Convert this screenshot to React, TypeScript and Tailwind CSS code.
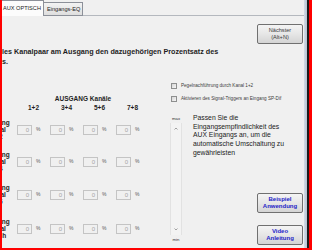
import React from 'react';

const columns = ['1+2', '3+4', '5+6', '7+8'];

const rows = [
  { label: ['Eingang', 'Kanal', '1+2'], mt: 'mt-[7px]' },
  { label: ['Eingang', 'Kanal', '3+4'], mt: 'mt-[11px]' },
  { label: ['Eingang', 'Kanal', '5+6'], mt: 'mt-[12px]' },
  { label: ['Eingang', 'Kanal', 'Misch'], mt: 'mt-[13px]' },
];

function WinButton({ lines, blue }: { lines: string[]; blue?: boolean }) {
  return (
    <div
      className={
        'w-[46px] h-[20px] rounded-[2px] border border-[#707070] bg-linear-to-b from-[#f4f4f4] via-[#e6e6e6] to-[#d4d4d4] flex flex-col items-center justify-center leading-[7px] ' +
        (blue ? 'text-[6px] font-bold text-[#2424c8]' : 'text-[5.6px] text-[#3a3a3a]')
      }
    >
      {lines.map(l => (
        <span key={l}>{l}</span>
      ))}
    </div>
  );
}

function Checkbox({ label }: { label: string }) {
  return (
    <div className="flex items-center h-[6px] pl-[21px] whitespace-nowrap">
      <div className="w-[6px] h-[6px] shrink-0 border border-[#8e8f8f] bg-linear-to-br from-[#d6d6d6] to-[#f6f6f6]" />
      <span className="ml-[4px] text-[4.6px] leading-[6px] text-[#3c3c3c]">{label}</span>
    </div>
  );
}

function PercentCell() {
  return (
    <div className="w-[33px] flex items-center shrink-0">
      <div className="w-[15px] h-[10px] border border-[#c4c4c4] bg-[#f0f0f0] flex items-center justify-end pr-[2px] text-[6px] text-[#a6a6a6] leading-none">
        0
      </div>
      <span className="ml-[4px] text-[5px] text-[#5a5a5a] leading-none">%</span>
    </div>
  );
}

export default function App() {
  return (
    <div className="w-[312px] h-[250px] flex flex-col bg-[#f0f0f0] overflow-hidden font-['Liberation_Sans',Arial,sans-serif] text-[#1e1e1e]">
      <div className="flex-1 flex min-h-0">
        <div className="w-[2px] bg-[#ff0000]" />

        <div className="flex-1 flex flex-col min-w-0 overflow-hidden">
          {/* tabs */}
          <div className="h-[16px] flex items-end shrink-0">
            <div className="h-[16px] w-[42px] bg-[#fcfcfc] border-t border-r border-[#8c9099] pl-[1px] pt-[4px] text-[5.6px] leading-[7px] text-[#222] whitespace-nowrap">
              AUX OPTISCH
            </div>
            <div className="h-[14px] w-[39px] border-t border-r border-b border-[#8c9099] bg-linear-to-b from-[#f3f3f3] to-[#dedede] pl-[3px] pt-[3px] text-[5.6px] leading-[7px] text-[#222] whitespace-nowrap">
              Eingangs-EQ
            </div>
            <div className="flex-1 h-[1px] bg-[#b4b8be]" />
          </div>

          {/* panel */}
          <div className="flex-1 flex flex-col min-h-0">
            <div className="flex justify-end pt-[8px] pr-[1px]">
              <WinButton lines={['Nächster', '(Alt+N)']} />
            </div>

            <div className="mt-[3px] text-[7.2px] leading-[10px] font-bold whitespace-nowrap">
              <div>les Kanalpaar am Ausgang den dazugehörigen Prozentsatz des</div>
              <div>s.</div>
            </div>

            <div className="flex-1 flex min-h-0">
              {/* left table */}
              <div className="w-[148px] shrink-0 flex flex-col">
                <div className="mt-[28px] ml-[15px] w-[132px] text-center text-[6.5px] leading-[8px] font-bold">
                  AUSGANG Kanäle
                </div>
                <div className="mt-[1px] ml-[15px] flex">
                  {columns.map(c => (
                    <div key={c} className="w-[33px] text-center text-[6.5px] leading-[8px] font-bold">
                      {c}
                    </div>
                  ))}
                </div>
                {rows.map((r, i) => (
                  <div key={i} className={'flex items-center h-[21px] ' + r.mt}>
                    <div className="-ml-[25px] w-[40px] shrink-0 text-center text-[6.5px] leading-[7px] font-bold">
                      {r.label.map(l => (
                        <div key={l}>{l}</div>
                      ))}
                    </div>
                    <div className="flex">
                      {columns.map(c => (
                        <PercentCell key={c} />
                      ))}
                    </div>
                  </div>
                ))}
              </div>

              {/* right side */}
              <div className="flex-1 flex flex-col min-w-0">
                <div className="mt-[16px]">
                  <Checkbox label="Pegelnachführung durch Kanal 1+2" />
                </div>
                <div className="mt-[7px]">
                  <Checkbox label="Aktivieren des Signal-Triggers an Eingang SP-Dif" />
                </div>

                <div className="flex-1 flex mt-[12px] min-h-0">
                  <div className="ml-[20px] w-[12px] flex flex-col items-center shrink-0">
                    <div className="mt-[2px] text-[4.3px] leading-[6px] text-[#333]">max</div>
                    <div className="mt-[1px] w-[12px] h-[112px] border-x border-[#e2e2e2] bg-[#f3f3f3] flex flex-col items-center justify-between py-[4px]">
                      <svg width="4" height="3" viewBox="0 0 4 3">
                        <path d="M0.5 2.5 L2 1 L3.5 2.5" stroke="#8a8a8a" strokeWidth="0.8" fill="none" />
                      </svg>
                      <svg width="4" height="3" viewBox="0 0 4 3">
                        <path d="M0.5 0.5 L2 2 L3.5 0.5" stroke="#8a8a8a" strokeWidth="0.8" fill="none" />
                      </svg>
                    </div>
                    <div className="mt-[2px] text-[4.3px] leading-[6px] text-[#333]">min</div>
                  </div>

                  <div className="ml-[11px] flex-1 flex flex-col pb-[3px] min-w-0">
                    <div className="text-[6.8px] leading-[8.7px] text-[#222] whitespace-nowrap">
                      Passen Sie die
                      <br />
                      Eingangsempfindlichkeit des
                      <br />
                      AUX Eingangs an, um die
                      <br />
                      automatische Umschaltung zu
                      <br />
                      gewährleisten
                    </div>
                    <div className="mt-auto self-end mr-[1px] flex flex-col gap-[12px]">
                      <WinButton lines={['Beispiel', 'Anwendung']} blue />
                      <WinButton lines={['Video', 'Anleitung']} blue />
                    </div>
                  </div>
                </div>
              </div>
            </div>
          </div>
        </div>

        <div className="w-[3px] bg-linear-to-r from-[#d3dbe6] to-[#b7c3d2]" />
        <div className="w-[2px] bg-[#1c1c1c]" />
        <div className="w-[3px] bg-[#ff0000]" />
      </div>
      <div className="h-[2px] bg-[#ff0000] shrink-0" />
    </div>
  );
}
